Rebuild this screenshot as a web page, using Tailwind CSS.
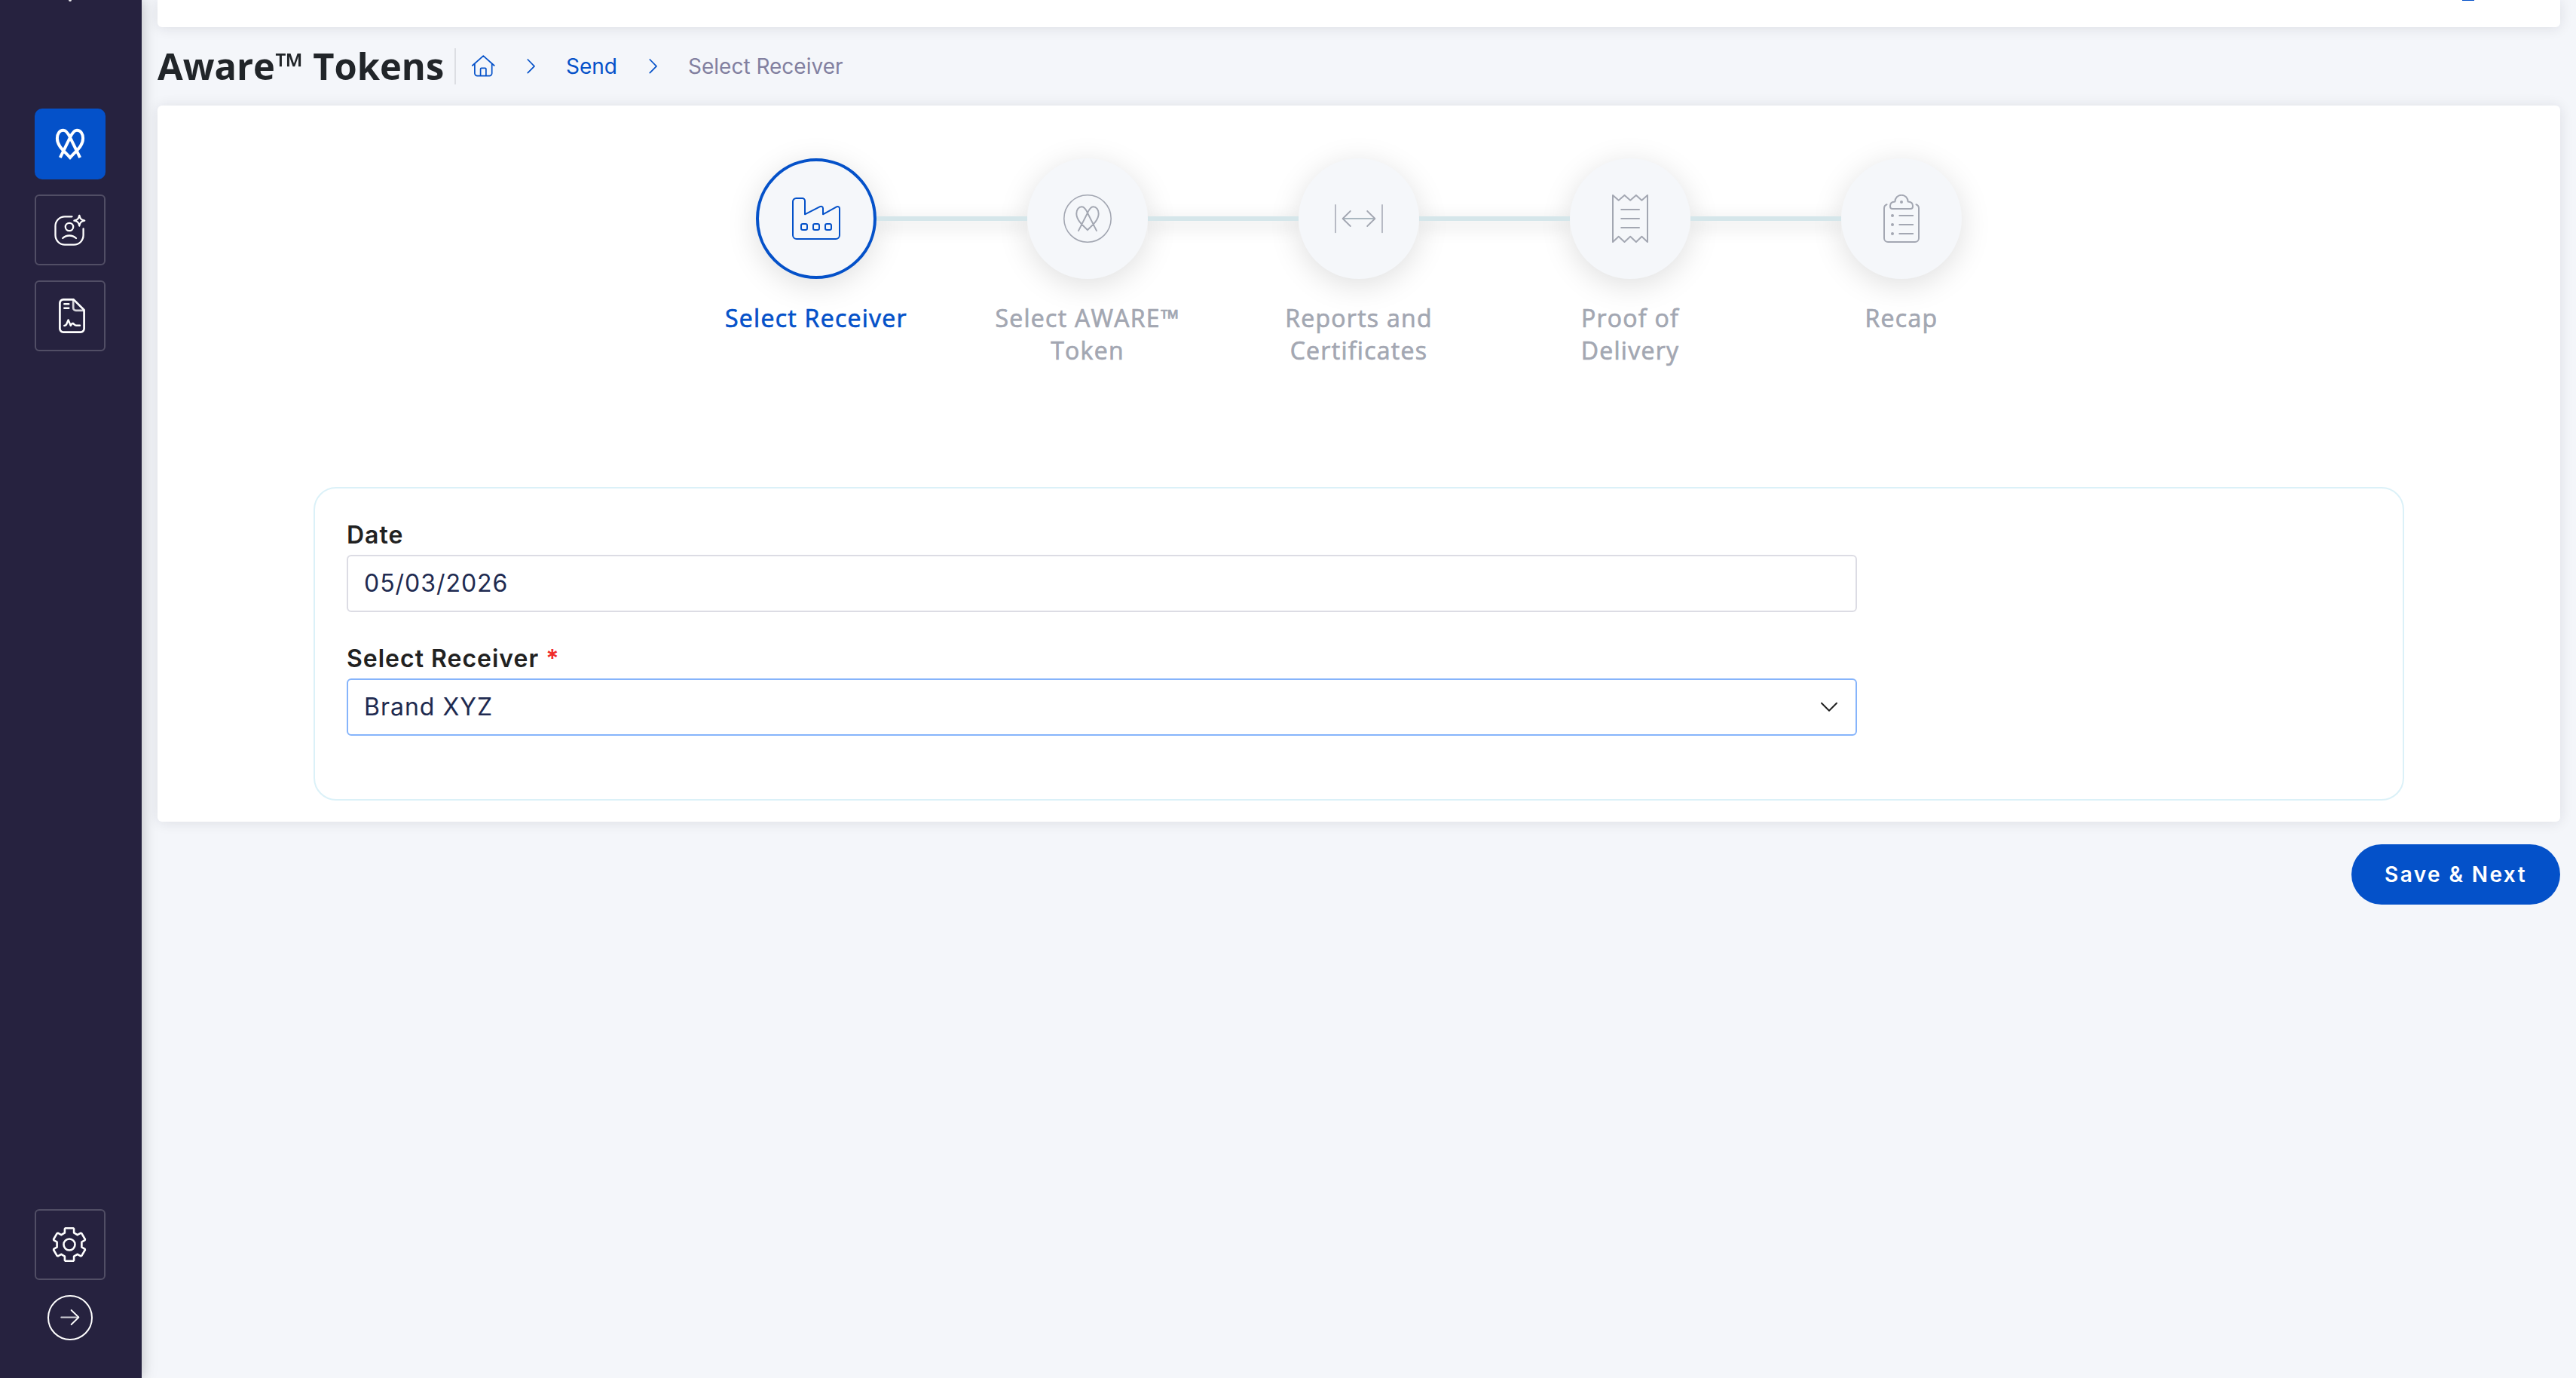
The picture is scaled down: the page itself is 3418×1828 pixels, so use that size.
<!DOCTYPE html>
<html lang="en">
<head>
    <meta charset="UTF-8">
    <meta name="viewport" content="width=device-width, initial-scale=1.0">
    <title>Send - Select Receiver</title>
    <script src="https://cdn.jsdelivr.net/npm/@tailwindcss/browser@4"></script>
</head>
<body class="bg-[#f4f6fa] h-[1828px] flex overflow-hidden font-['Inter',sans-serif]">
    <!-- Sidebar -->
    <aside class="relative z-10 w-[188px] h-full shrink-0 bg-[#26223f] flex flex-col items-center pr-0.5 shadow-[0_0_18px_rgba(0,0,0,0.25)]">
        <div class="w-1 h-0.5 bg-white/90 rounded-b-full"></div>
        <nav class="mt-[142px] flex flex-col gap-5">
            <a href="#" class="size-[94px] rounded-[10px] bg-[#0451c9] flex items-center justify-center">
                <svg class="w-10 h-[42px]" viewBox="0 0 40 42" fill="none" stroke="#fff" stroke-width="4">
                    <path d="M33.2 39.2 20 12.5C18 8 15 2.7 11 2.7C6 2.7 2.9 7.5 2.9 13.5C2.9 23 10 28.5 20 39C30 28.5 37.1 23 37.1 13.5C37.1 7.5 34 2.7 29 2.7C25 2.7 22 8 20 12.5L6.8 39.2"/>
                </svg>
            </a>
            <a href="#" class="size-[94px] rounded-md border-2 border-white/20 flex items-center justify-center">
                <svg class="size-12" viewBox="0 0 48 48" fill="none" stroke="#fff" stroke-width="2.3" stroke-linecap="round" stroke-linejoin="round">
                    <path d="M26.5 6.3H17A12.5 12.5 0 0 0 4.5 18.8V31.1A12.5 12.5 0 0 0 17 43.6H29.1A12.5 12.5 0 0 0 41.6 31.1V22.5"/>
                    <circle cx="23" cy="20" r="5.2"/>
                    <path d="M14.2 35C19 30.3 27 30.3 32 35"/>
                    <path d="M36.3 4.8C37.3 9.3 38.6 10.7 43.2 11.7C38.6 12.7 37.3 14 36.3 18.6C35.3 14 34 12.7 29.4 11.7C34 10.7 35.3 9.3 36.3 4.8Z"/>
                </svg>
            </a>
            <a href="#" class="size-[94px] rounded-md border-2 border-white/20 flex items-center justify-center">
                <svg class="size-12" viewBox="0 0 48 48" fill="none" stroke="#fff" stroke-width="2.7" stroke-linecap="round" stroke-linejoin="round">
                    <path stroke="#d4d3d9" d="M28.2 3V13.5a3.3 3.3 0 0 0 3.3 3.3H42"/>
                    <path d="M28.7 2.4H15A4.6 4.6 0 0 0 10.4 7V41A4.6 4.6 0 0 0 15 45.6H38A4.6 4.6 0 0 0 42.6 41V16.2Z"/>
                    <path stroke-width="2.4" d="M16.3 8.3H22.3M16.3 13.8H22.3"/>
                    <path stroke-width="2.4" d="M16.3 37c2 0 2.6-.6 3.4-3l1.9-4.6L24.8 37c.9-2.2 1.7-3 2.9-3S29.8 36.8 32 36.8H37"/>
                </svg>
            </a>
        </nav>
        <div class="mt-auto mb-[50px] flex flex-col items-center gap-5">
            <a href="#" class="size-[94px] rounded-md border-2 border-white/20 flex items-center justify-center pr-0.5">
                <svg class="size-12" viewBox="-24 -24 48 48" fill="none" stroke="#fff" stroke-width="2.6" stroke-linejoin="round">
                    <path d="M-5.2-21.7H5.2L6.1-20.9V-15.6L10.7-12.8L15.2-15.3L16.3-14.9L20.9-7L20.6-5.9L16.4-3.4V3.4L20.6 5.9L20.9 7L16.3 14.9L15.2 15.3L10.7 12.8L6.1 15.6V20.9L5.2 21.7H-5.2L-6.1 20.9V15.6L-10.7 12.8L-15.2 15.3L-16.3 14.9L-20.9 7L-20.6 5.9L-16.4 3.4V-3.4L-20.6-5.9L-20.9-7L-16.3-14.9L-15.2-15.3L-10.7-12.8L-6.1-15.6V-20.9Z"/>
                    <circle r="7.5"/>
                </svg>
            </a>
            <button class="size-[60px] rounded-full border-2 border-white flex items-center justify-center">
                <svg class="size-14 shrink-0" viewBox="2 2 56 56" fill="none" stroke="#fff" stroke-width="1.8" stroke-linecap="round" stroke-linejoin="round">
                    <path stroke="#d0cfd6" d="M18.2 29.5H41"/>
                    <path d="M31.6 20L41.4 29.5L31.6 39"/>
                </svg>
            </button>
        </div>
    </aside>

    <div class="w-[3188px] ml-[21px] flex flex-col">
        <!-- Top bar -->
        <header class="h-9 shrink-0 bg-white rounded-b-md shadow-[0_1px_18px_rgba(30,30,45,0.11)] flex justify-end pr-[114px]">
            <div class="w-4 h-px bg-[#0451c9]"></div>
        </header>

        <!-- Title and breadcrumb -->
        <div class="h-[104px] shrink-0 flex items-center">
            <h1 class="w-[394px] pb-0.5 whitespace-nowrap font-['Open_Sans',sans-serif] font-bold text-[48.8px] leading-[60px] text-[#212529]">Aware™ Tokens</h1>
            <div class="w-0.5 h-12 bg-[#dcdee3]"></div>
            <nav class="ml-5 flex items-center gap-10 text-[28px] leading-10 whitespace-nowrap">
                <a href="#" class="mr-0.5">
                    <svg class="size-8" viewBox="0 0 32 32" fill="none" stroke="#0451c9" stroke-width="1.7" stroke-linecap="round" stroke-linejoin="round">
                        <path d="M1.8 15L16.3 2.2L30.8 15M4.9 12.6V25.3A3.3 3.3 0 0 0 8.2 28.6H24.4A3.3 3.3 0 0 0 27.7 25.3V12.6M12.6 28.4V19.6A1.2 1.2 0 0 1 13.8 18.4H18.7A1.2 1.2 0 0 1 19.9 19.6V28.4"/>
                    </svg>
                </a>
                <svg class="w-3 h-5" viewBox="0 0 12 20" fill="none" stroke="#0451c9" stroke-width="1.7" stroke-linecap="round" stroke-linejoin="round"><path d="M1.3 1L10 9.8L1.3 18.6"/></svg>
                <a href="#" class="text-[#0451c9]">Send</a>
                <svg class="w-3 h-5 ml-0.5" viewBox="0 0 12 20" fill="none" stroke="#0451c9" stroke-width="1.7" stroke-linecap="round" stroke-linejoin="round"><path d="M1.3 1L10 9.8L1.3 18.6"/></svg>
                <span class="text-[#8280a0]">Select Receiver</span>
            </nav>
        </div>

        <!-- Main card -->
        <main class="h-[950px] shrink-0 bg-white rounded-md shadow-[0_1px_18px_rgba(30,30,45,0.11)] flex flex-col items-center pt-[70px]">
            <!-- Stepper -->
            <div class="flex items-center">
                <div class="size-40 rounded-full bg-[#f5f7fa] border-4 border-[#0451c9] shadow-[0_8px_40px_rgba(0,0,0,0.13)] flex items-center justify-center">
                    <svg class="size-16" viewBox="0 0 64 64" fill="none" stroke="#0451c9" stroke-width="2" stroke-linejoin="round">
                        <path d="M5.5 5H13.5A3.5 3.5 0 0 1 17 8.5V26.3L37 16.2C39 15.3 41 16.3 41 18.5V26.3L59 16.4C61 15.4 63 16.4 63 18.8V54A5 5 0 0 1 58 59H6A5 5 0 0 1 1 54V9.5A4.5 4.5 0 0 1 5.5 5Z"/>
                        <rect x="12" y="39" width="8" height="8" rx="2.2"/>
                        <rect x="28" y="39" width="8" height="8" rx="2.2"/>
                        <rect x="44" y="39" width="8" height="8" rx="2.2"/>
                    </svg>
                </div>
                <div class="w-[200px] h-1.5 bg-[#d5e6ea] shadow-[0_6px_24px_rgba(0,0,0,0.2)] [clip-path:inset(-40px_0)]"></div>
                <div class="size-40 rounded-full bg-[#f5f7fa] shadow-[0_8px_40px_rgba(0,0,0,0.13)] flex items-center justify-center">
                    <svg class="size-16" viewBox="0 0 64 64" fill="none" stroke="#a3a7b2" stroke-width="1.6">
                        <circle cx="32" cy="32" r="31.2"/>
                        <g transform="translate(15.2 14) scale(.84)" stroke-width="2.3" stroke-linecap="round">
                            <path d="M34.3 40.6 20 12.5C18 8 15 2.7 11 2.7C6 2.7 2.5 7.5 2.5 13.5C2.5 23 10 30 20 39.4C30 30 37.5 23 37.5 13.5C37.5 7.5 34 2.7 29 2.7C25 2.7 22 8 20 12.5L5.7 40.6"/>
                        </g>
                    </svg>
                </div>
                <div class="w-[200px] h-1.5 bg-[#d5e6ea] shadow-[0_6px_24px_rgba(0,0,0,0.2)] [clip-path:inset(-40px_0)]"></div>
                <div class="size-40 rounded-full bg-[#f5f7fa] shadow-[0_8px_40px_rgba(0,0,0,0.13)] flex items-center justify-center">
                    <svg class="size-16" viewBox="0 0 64 64" fill="none" stroke="#a3a7b2" stroke-width="1.8" stroke-linecap="round" stroke-linejoin="round">
                        <path stroke-width="1.5" d="M1 13.8V50.4M63 13.8V50.4"/>
                        <path stroke="#aab7c0" d="M11 32H53"/>
                        <path d="M20.8 22L10.6 32L20.8 42M43.2 22L53.4 32L43.2 42"/>
                    </svg>
                </div>
                <div class="w-[200px] h-1.5 bg-[#d5e6ea] shadow-[0_6px_24px_rgba(0,0,0,0.2)] [clip-path:inset(-40px_0)]"></div>
                <div class="size-40 rounded-full bg-[#f5f7fa] shadow-[0_8px_40px_rgba(0,0,0,0.13)] flex items-center justify-center">
                    <svg class="size-16" viewBox="0 0 64 64" fill="none" stroke="#a3a7b2" stroke-width="2" stroke-linecap="round" stroke-linejoin="round">
                        <path d="M9 1L16.7 7.7L24.5 1L32.2 7.7L39.9 1L47.4 7.7L55 1V63L47.4 55.8L39.9 63L32.2 55.8L24.5 63L16.7 55.8L9 63Z"/>
                        <path d="M20.2 20H44M20.2 32H44M20.2 44H44"/>
                    </svg>
                </div>
                <div class="w-[200px] h-1.5 bg-[#d5e6ea] shadow-[0_6px_24px_rgba(0,0,0,0.2)] [clip-path:inset(-40px_0)]"></div>
                <div class="size-40 rounded-full bg-[#f5f7fa] shadow-[0_8px_40px_rgba(0,0,0,0.13)] flex items-center justify-center">
                    <svg class="size-16" viewBox="0 0 64 64" fill="none" stroke="#a3a7b2" stroke-width="2" stroke-linecap="round" stroke-linejoin="round">
                        <path d="M12.5 13.2C10.4 14 9 15.8 9 18.2V58A5 5 0 0 0 14 63H50A5 5 0 0 0 55 58V18.2C55 15.8 53.6 14 51.5 13.2"/>
                        <path d="M20 19H44A3 3 0 0 0 47 16V15C47 11.8 44.5 9.6 40.6 9.4A8.6 8.6 0 0 0 23.4 9.4C19.5 9.6 17 11.8 17 15V16A3 3 0 0 0 20 19Z"/>
                        <path d="M29.3 28H47.2M29.3 40H47.2M29.3 52H47.2"/>
                        <g fill="#a3a7b2" stroke="none">
                            <circle cx="32" cy="10" r="2"/>
                            <circle cx="20" cy="28" r="2"/>
                            <circle cx="20" cy="40" r="2"/>
                            <circle cx="20" cy="52" r="2"/>
                        </g>
                    </svg>
                </div>
            </div>
            <div class="mt-[30px] h-[86px] w-[1800px] grid grid-cols-5 text-center whitespace-nowrap font-['Open_Sans',sans-serif] font-medium text-[32px] leading-[43px] tracking-[1.28px] [-webkit-text-stroke:0.7px_currentColor] text-[#a3a7b2]">
                <div class="text-[#0451c9]">Select Receiver</div>
                <div>Select AWARE™<br>Token</div>
                <div>Reports and<br>Certificates</div>
                <div>Proof of<br>Delivery</div>
                <div>Recap</div>
            </div>

            <!-- Receiver form -->
            <form class="mt-40 w-[2774px] h-[416px] border-2 border-[#dbf1f8] rounded-[30px] pl-[42px] pt-[38px] text-[32px] tracking-[1px]">
                <div class="w-[2004px]">
                    <label for="date" class="block h-[50px] leading-[48px] font-semibold text-[#212121]">Date</label>
                    <input type="text" id="date" name="date" value="05/03/2026" class="block w-full h-[76px] px-[21px] pb-0.5 border-2 border-[#dcdce4] rounded-md tracking-[0.96px] text-[#202a50]">
                </div>
                <div class="w-[2004px] mt-[38px]">
                    <label for="receiver" class="block h-[50px] leading-[48px] font-semibold text-[#212121]">Select Receiver <span class="text-[#f02b2b]">*</span></label>
                    <div id="receiver" class="w-full h-[76px] pl-[21px] pr-[23px] border-2 border-[#86b4fb] rounded-md flex items-center justify-between text-[#202a50]">
                        <span>Brand XYZ</span>
                        <svg class="w-6 h-3.5" viewBox="0 0 24 14" fill="none" stroke="#212121" stroke-width="2" stroke-linecap="round" stroke-linejoin="round"><path d="M2 1.8L12 11.8L22 1.8"/></svg>
                    </div>
                </div>
            </form>
        </main>

        <div class="mt-[30px] flex justify-end">
            <button class="w-[277px] h-20 rounded-full bg-[#0451c9] text-white font-semibold text-[28px] tracking-[2.4px]">Save &amp; Next</button>
        </div>
    </div>
</body>
</html>
